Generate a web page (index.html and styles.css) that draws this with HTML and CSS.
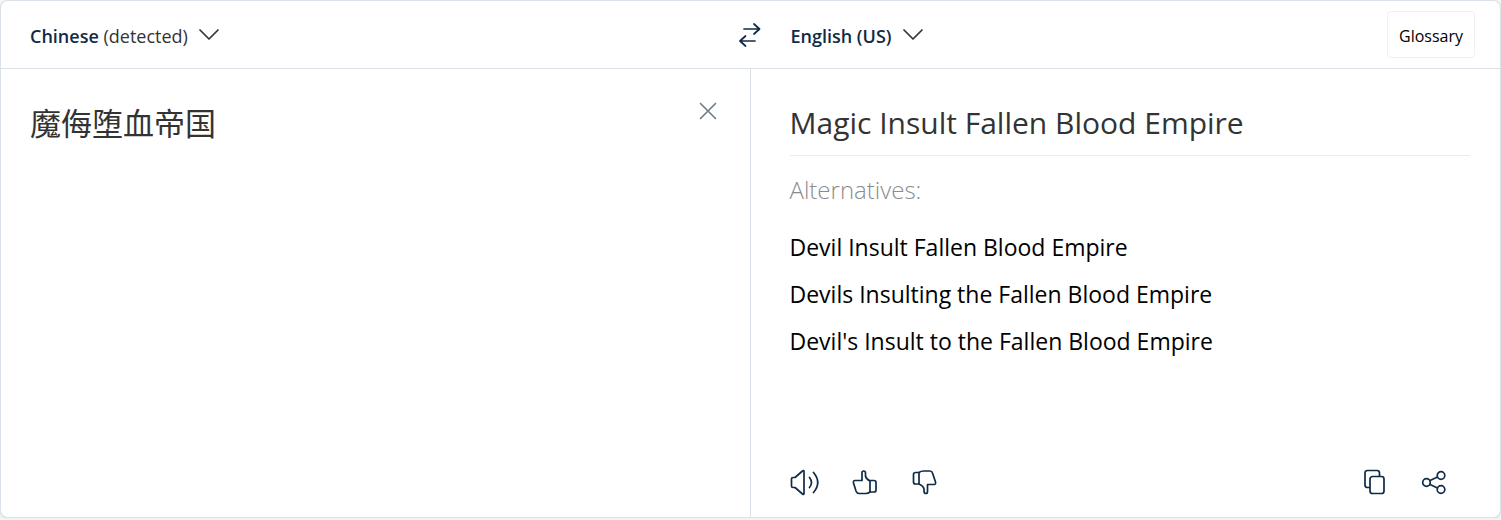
FILE: index.html
```html
<!DOCTYPE html>
<html lang="en">
<head>
    <meta charset="UTF-8">
    <meta name="viewport" content="width=device-width, initial-scale=1.0">
    <title>Translator</title>
    <link rel="stylesheet" href="styles.css">
</head>
<body>
    <main class="translator">
        <header class="toolbar">
            <div class="toolbar-side">
                <button class="lang-button" type="button">
                    <span><strong>Chinese</strong> (detected)</span>
                    <svg class="chevron" width="20" height="12" viewBox="0 0 20 12"><path d="M1 1l9 9 9-9"/></svg>
                </button>
                <button class="icon-button swap" type="button" aria-label="Swap languages">
                    <svg width="24" height="24" viewBox="0 0 24 24"><path d="M6 6h15.500M16 1l5.500 5-5.500 5M17 18H2M7.500 13L2 18l5.500 5"/></svg>
                </button>
            </div>
            <div class="toolbar-side target-side">
                <button class="lang-button" type="button">
                    <strong>English (US)</strong>
                    <svg class="chevron" width="20" height="12" viewBox="0 0 20 12"><path d="M1 1l9 9 9-9"/></svg>
                </button>
                <button class="glossary" type="button">Glossary</button>
            </div>
        </header>
        <div class="panes">
            <section class="pane source">
                <textarea class="source-text" aria-label="Source text" lang="zh-CN" spellcheck="false">魔侮堕血帝国</textarea>
                <button class="icon-button clear" type="button" aria-label="Clear text">
                    <svg width="18" height="18" viewBox="0 0 18 18"><path d="M1.500 1.500l15 15M16.500 1.500l-15 15"/></svg>
                </button>
            </section>
            <section class="pane target">
                <p class="translation">Magic Insult Fallen Blood Empire</p>
                <h2>Alternatives:</h2>
                <ul class="alternatives">
                    <li>Devil Insult Fallen Blood Empire</li>
                    <li>Devils Insulting the Fallen Blood Empire</li>
                    <li>Devil's Insult to the Fallen Blood Empire</li>
                </ul>
                <div class="actions">
                    <button class="icon-button" type="button" aria-label="Listen">
                        <svg width="30" height="28" viewBox="0 0 30 28"><path d="M1.500 11q0-1.500 1.500-1.500h2l7.500-6.500q1.500-1 1.500 .5v22q0 1.500-1.500 .5L5 19.500H3q-1.500 0-1.500-1.500z"/><path d="M19.500 9.500q4 5 0 10M23.500 4.500q8.500 10 0 20"/></svg>
                    </button>
                    <button class="icon-button" type="button" aria-label="Good translation">
                        <svg width="30" height="28" viewBox="0 0 30 28"><path d="M5 12.500h7V5q0-2 1.500-2Q15.500 3 15.500 5v3q.5 3 4.500 5v11q-2 1.500-4 1.500H9q-2 0-3-2.500L3.500 15Q3 12.500 5 12.500z"/><path d="M20 12.500h4q2 0 2 2V22q0 2-2 2h-4"/></svg>
                    </button>
                    <button class="icon-button" type="button" aria-label="Bad translation">
                        <svg width="30" height="28" viewBox="0 0 30 28"><path d="M9 4.500Q11 3 13.500 3H20q2 0 2.500 2l3 9q.5 2.500-1.500 2.500h-6.500V23.500q0 2-1.500 2Q14 25.500 14 23v-2q-.5-3-5-5z"/><path d="M9 4.500H5.500q-2 0-2 2V14q0 2 2 2H9"/></svg>
                    </button>
                    <button class="icon-button copy" type="button" aria-label="Copy">
                        <svg width="30" height="28" viewBox="0 0 30 28"><rect x="10" y="8.500" width="14" height="17" rx="2.500"/><path d="M9.500 19.500H7.500q-2.500 0-2.500-2.500V5q0-2.500 2.500-2.500h9.500q2.500 0 2.500 2.500v3"/></svg>
                    </button>
                    <button class="icon-button" type="button" aria-label="Share">
                        <svg width="30" height="28" viewBox="0 0 30 28"><circle cx="6.500" cy="14.500" r="3.800"/><circle cx="21" cy="7.500" r="3.800"/><circle cx="21" cy="21.500" r="3.800"/><path d="M10 12.500l7.500-3.500M10 16.500l7.500 3.500"/></svg>
                    </button>
                </div>
            </section>
        </div>
    </main>
</body>
</html>
```
FILE: styles.css
```css
* { box-sizing: border-box; }
body { margin: 0; background-color: #f3f4f5; color: #333; font-family: "Open Sans", "Noto Sans CJK SC", sans-serif; font-size: 18px; }
button { margin: 0; padding: 0; border: 0; background: none; font: inherit; color: inherit; cursor: pointer; }
svg { display: block; fill: none; stroke: currentColor; stroke-width: 1.7; stroke-linecap: round; stroke-linejoin: round; }

.translator { display: flex; flex-direction: column; min-height: calc(100vh - 2px); background-color: #fff; border: 1px solid #dae1e8; border-radius: 8px; box-shadow: 0 1px 2px rgba(15, 43, 70, 0.1); }

.toolbar { display: grid; grid-template-columns: 1fr 1fr; border-bottom: 1px solid #dae1e8; }
.toolbar-side { display: flex; align-items: center; justify-content: space-between; height: 67px; padding-left: 29px; }
.target-side { padding: 0 25px 0 40px; }
.lang-button { display: flex; align-items: center; gap: 11px; padding-top: 3px; }
.lang-button strong { color: #0f2b46; font-weight: 600; }
.chevron { margin-bottom: 2px; }
.icon-button { color: #0f2b46; }
.swap { margin-right: -11px; }
.glossary { height: 47px; padding: 2px 11px 0; border: 1px solid #f0f0f0; border-radius: 4px; color: #000; font-size: 16px; }

.panes { display: grid; grid-template-columns: 1fr 1fr; flex: 1; }
.pane { padding: 32px 30px 21px 29px; }
.source { display: flex; align-items: flex-start; border-right: 1px solid #dae1e8; }
.source-text { flex: 1; align-self: stretch; padding: 0; border: 0; outline: 0; resize: none; background: none; color: #333; font-family: inherit; font-size: 31px; line-height: 44px; }
.clear { margin: 1px 3px; color: #6f7f8c; }

.target { display: flex; flex-direction: column; padding-left: 39px; }
.translation { margin: 0; padding-bottom: 10px; border-bottom: 1px solid #ebebeb; font-size: 30px; line-height: 44px; }
.target h2 { margin: 16px 0; color: #8c8c8c; font-size: 24px; font-weight: 300; line-height: 36px; }
.alternatives { margin: 0; padding: 0; list-style: none; color: #000; font-size: 23px; line-height: 47px; }
.actions { display: flex; gap: 30px; margin-top: auto; margin-right: 20px; }
.copy { margin-left: auto; }
```
